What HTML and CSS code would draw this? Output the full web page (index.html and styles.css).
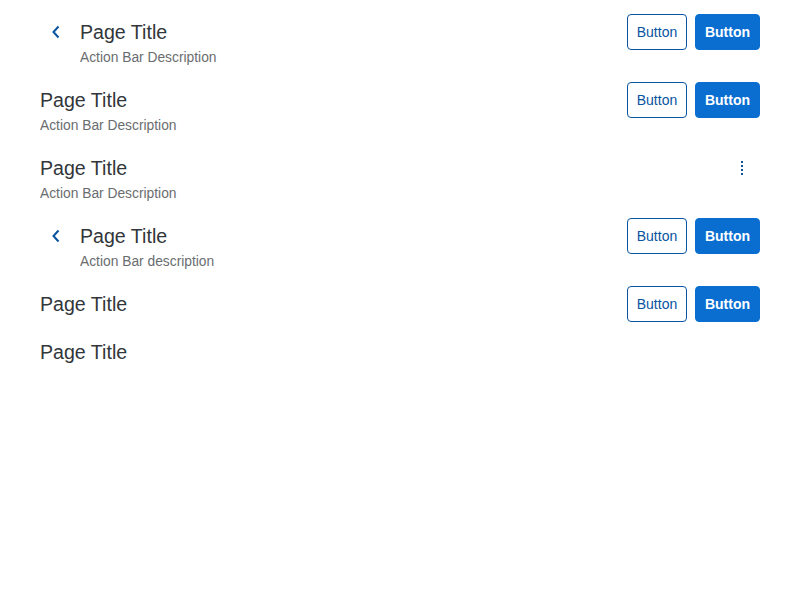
FILE: index.html
```html
<!DOCTYPE html>
<html lang="en">
<head>
<meta charset="utf-8">
<title>Action Bar</title>
<link rel="stylesheet" href="styles.css">
</head>
<body>
  <section class="action-bar">
    <div class="ab-header">
      <button class="back-btn" aria-label="Back">
        <svg width="10" height="14" viewBox="0 0 10 14"><polyline points="7.5,1.5 2.5,7 7.5,12.5" fill="none" stroke="#0854a0" stroke-width="2"/></svg>
      </button>
      <h3 class="ab-title">Page Title</h3>
      <div class="ab-actions">
        <button class="btn btn-outline">Button</button>
        <button class="btn btn-primary">Button</button>
      </div>
    </div>
    <p class="ab-desc indent">Action Bar Description</p>
  </section>

  <section class="action-bar">
    <div class="ab-header">
      <h3 class="ab-title">Page Title</h3>
      <div class="ab-actions">
        <button class="btn btn-outline">Button</button>
        <button class="btn btn-primary">Button</button>
      </div>
    </div>
    <p class="ab-desc">Action Bar Description</p>
  </section>

  <section class="action-bar">
    <div class="ab-header">
      <h3 class="ab-title">Page Title</h3>
      <div class="ab-actions">
        <button class="overflow-btn" aria-label="More">
          <svg width="2" height="14" viewBox="0 0 2 14"><rect x="0" y="0" width="2" height="2" fill="#0854a0"/><rect x="0" y="4" width="2" height="2" fill="#0854a0"/><rect x="0" y="8" width="2" height="2" fill="#0854a0"/><rect x="0" y="12" width="2" height="2" fill="#0854a0"/></svg>
        </button>
      </div>
    </div>
    <p class="ab-desc">Action Bar Description</p>
  </section>

  <section class="action-bar">
    <div class="ab-header">
      <button class="back-btn" aria-label="Back">
        <svg width="10" height="14" viewBox="0 0 10 14"><polyline points="7.5,1.5 2.5,7 7.5,12.5" fill="none" stroke="#0854a0" stroke-width="2"/></svg>
      </button>
      <h3 class="ab-title">Page Title</h3>
      <div class="ab-actions">
        <button class="btn btn-outline">Button</button>
        <button class="btn btn-primary">Button</button>
      </div>
    </div>
    <p class="ab-desc indent">Action Bar description</p>
  </section>

  <section class="action-bar">
    <div class="ab-header">
      <h3 class="ab-title">Page Title</h3>
      <div class="ab-actions">
        <button class="btn btn-outline">Button</button>
        <button class="btn btn-primary">Button</button>
      </div>
    </div>
  </section>

  <section class="action-bar">
    <div class="ab-header plain">
      <h3 class="ab-title">Page Title</h3>
    </div>
  </section>
</body>
</html>
```

FILE: styles.css
```css
html, body {
  margin: 0;
  padding: 0;
  background: #ffffff;
}

body {
  font-family: "Liberation Sans", Arial, sans-serif;
  color: #32363a;
}

.action-bar {
  padding: 14px 40px 4px 40px;
}

.ab-header {
  display: flex;
  align-items: center;
  min-height: 36px;
}

.ab-header.plain {
  min-height: 24px;
}

.back-btn {
  width: 32px;
  height: 36px;
  margin-right: 8px;
  padding: 0;
  border: none;
  background: transparent;
  display: flex;
  align-items: center;
  justify-content: center;
}

.ab-title {
  margin: 0;
  font-size: 19.6px;
  font-weight: normal;
  line-height: 24px;
  color: #32363a;
  flex: 1;
}

.ab-actions {
  display: flex;
  gap: 8px;
  align-items: center;
}

.btn {
  height: 36px;
  border-radius: 4px;
  font-family: "Liberation Sans", Arial, sans-serif;
  font-size: 14px;
  cursor: pointer;
}

.btn-outline {
  width: 60px;
  padding: 0;
  background: #ffffff;
  border: 1px solid #0854a0;
  color: #0854a0;
}

.btn-primary {
  width: 65px;
  padding: 0;
  background: #0a6ed1;
  border: 1px solid #0a6ed1;
  color: #ffffff;
  font-weight: bold;
}

.overflow-btn {
  width: 36px;
  height: 36px;
  padding: 0;
  border: none;
  background: transparent;
  display: flex;
  align-items: center;
  justify-content: center;
}

.ab-desc {
  margin: 1px 0 -1px 0;
  font-size: 13.8px;
  line-height: 14px;
  color: #6a6d70;
}

.ab-desc.indent {
  padding-left: 40px;
}
```
